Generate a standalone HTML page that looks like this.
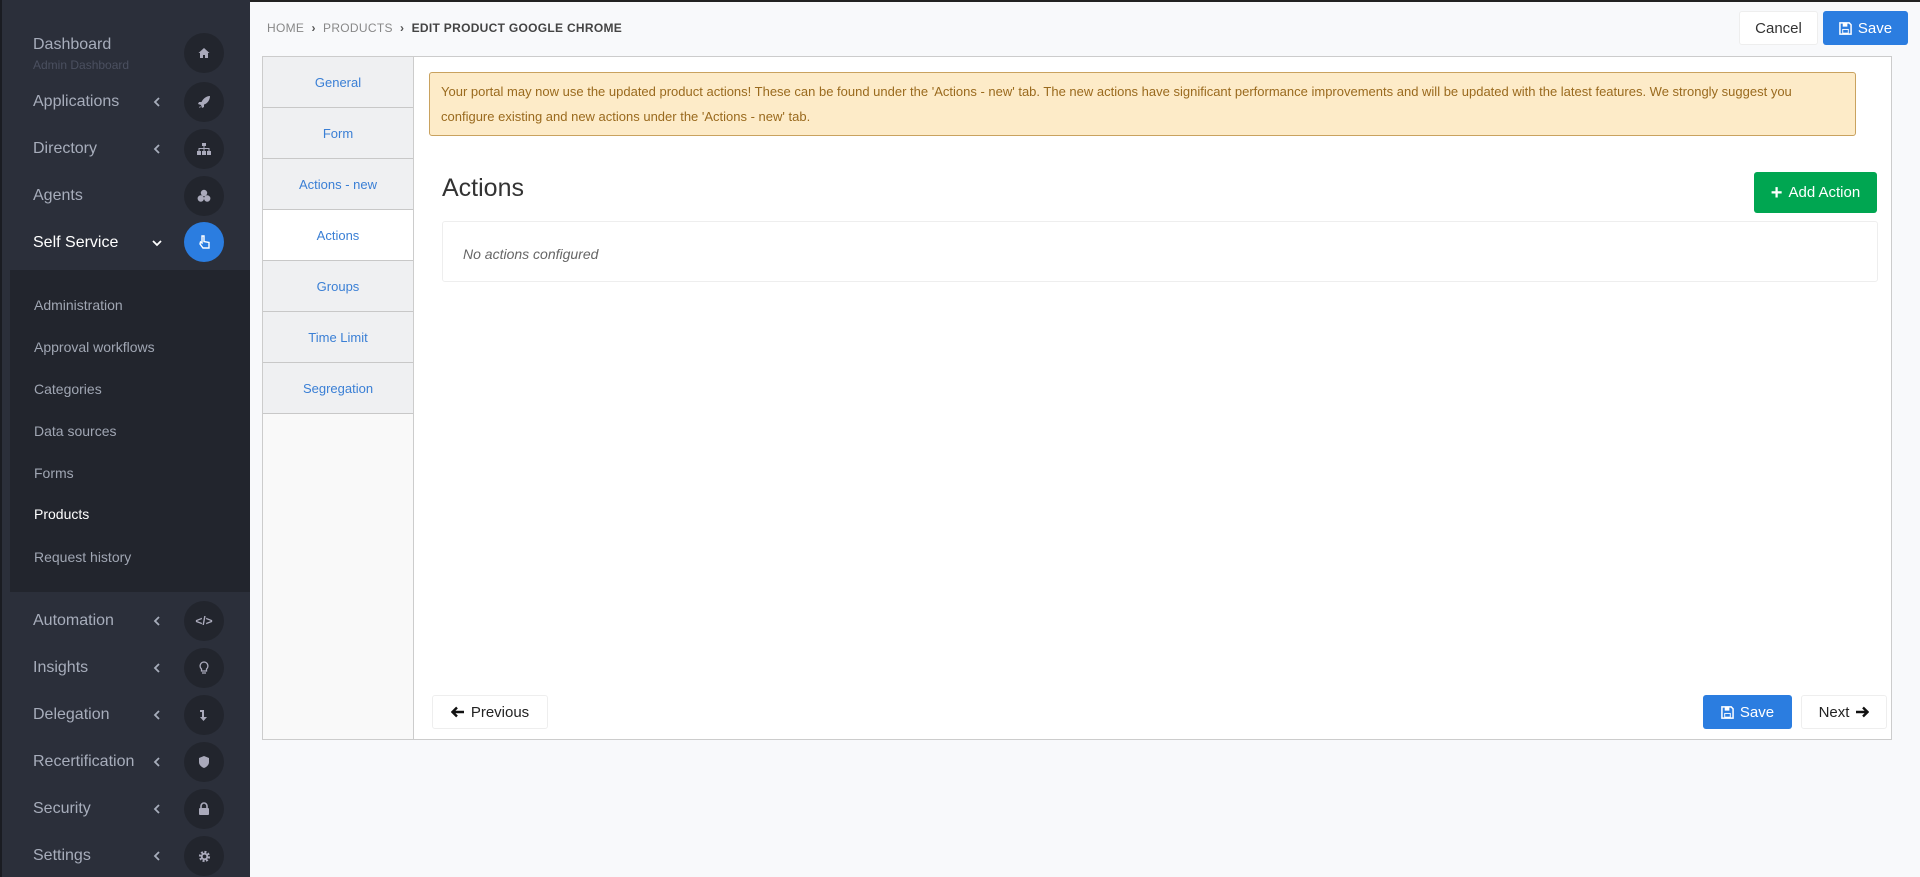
<!DOCTYPE html>
<html><head><meta charset="utf-8"><style>
*{box-sizing:border-box;margin:0;padding:0}
body{width:1920px;height:877px;overflow:hidden;font-family:"Liberation Sans",sans-serif;background:#f8f9fb;position:relative}
#sb{position:absolute;left:0;top:0;width:250px;height:877px;background:#2b2f3a;border-left:2px solid #1a1c22}
.it{position:absolute;left:31px;font-size:16px;color:#a7adbb}
.ic{position:absolute;left:182px;width:40px;height:40px;border-radius:50%;background:#22252d;display:flex;align-items:center;justify-content:center}
.ch{position:absolute;left:150px;width:10px;height:12px}
#sub{position:absolute;left:8px;top:270px;width:240px;height:322px;background:#22252d}
.si{position:absolute;left:32px;font-size:14px;color:#a0a6b3}
#main{position:absolute;left:250px;top:0;right:0;height:877px;border-top:2px solid #222}
.bc{position:absolute;left:267px;top:21px;font-size:12px;color:#888;letter-spacing:.3px}
.btn{position:absolute;border-radius:3px;font-size:15px;display:flex;align-items:center;justify-content:center;gap:6px}
#panel{position:absolute;left:262px;top:56px;width:1630px;height:684px;background:#fff;border:1px solid #ccc}
#tabs{position:absolute;left:0;top:0;width:151px;height:682px;background:#f9f9f9;border-right:1px solid #ccc}
.tab{height:51px;border-bottom:1px solid #c8c8c8;background:#eff0f2;color:#3a7fd5;font-size:13px;display:flex;align-items:center;justify-content:center}
.tab.a{background:#fff}
</style></head><body>
<div id="sb">
<div class="it" style="top:36px;color:#a7adbb">Dashboard</div>
<div style="position:absolute;left:31px;top:58px;font-size:12px;color:#4b5060">Admin Dashboard</div>
<div class="ic" style="top:33px"><svg width="12" height="12" viewBox="0 0 12 12"><path d="M6 1L0.5 6H2v5h3V8h2v3h3V6h1.5z" fill="#aab"/></svg></div>
<div class="it" style="top:93px">Applications</div><svg class="ch" style="top:96px" viewBox="0 0 10 12"><path d="M7 2L3 6l4 4" fill="none" stroke="#a7adbb" stroke-width="1.8"/></svg>
<div class="ic" style="top:82px"><svg width="14" height="14" viewBox="0 0 14 14"><path d="M13 1C9 1 6 4 4.5 7L2 7 1 9l3 1 1 3 2-1 0-2.5C10 9 13 5 13 1zM3 11l-1 2 2-1z" fill="#aab"/></svg></div>
<div class="it" style="top:140px">Directory</div><svg class="ch" style="top:143px" viewBox="0 0 10 12"><path d="M7 2L3 6l4 4" fill="none" stroke="#a7adbb" stroke-width="1.8"/></svg>
<div class="ic" style="top:129px"><svg width="14" height="12" viewBox="0 0 14 12"><rect x="5" y="0" width="4" height="3" fill="#aab"/><rect x="0" y="8" width="4" height="4" fill="#aab"/><rect x="5" y="8" width="4" height="4" fill="#aab"/><rect x="10" y="8" width="4" height="4" fill="#aab"/><path d="M7 3v5M2 8V5.5h10V8" stroke="#aab" fill="none"/></svg></div>
<div class="it" style="top:187px">Agents</div>
<div class="ic" style="top:176px"><svg width="14" height="14" viewBox="0 0 14 14"><circle cx="7" cy="4" r="3.2" fill="#aab"/><circle cx="3.8" cy="9.5" r="3.2" fill="#aab"/><circle cx="10.2" cy="9.5" r="3.2" fill="#aab"/></svg></div>
<div class="it" style="top:234px;color:#fff">Self Service</div><svg style="position:absolute;left:149px;top:237px;width:12px;height:12px" viewBox="0 0 12 12"><path d="M2 4l4 4 4-4" fill="none" stroke="#fff" stroke-width="1.8"/></svg>
<div class="ic" style="top:222px;background:#2b7de0"><svg width="14" height="14" viewBox="0 0 14 14"><path d="M5 1v7L3.5 7 3 9l3 4h6V7.5L7 6.5V1z" fill="none" stroke="#fff" stroke-width="1.4"/></svg></div>
<div id="sub"></div>
<div class="si" style="top:297px">Administration</div>
<div class="si" style="top:339px">Approval workflows</div>
<div class="si" style="top:381px">Categories</div>
<div class="si" style="top:423px">Data sources</div>
<div class="si" style="top:465px">Forms</div>
<div class="si" style="top:506px;color:#fff">Products</div>
<div class="si" style="top:549px">Request history</div>
<div class="it" style="top:612px">Automation</div><svg class="ch" style="top:615px" viewBox="0 0 10 12"><path d="M7 2L3 6l4 4" fill="none" stroke="#a7adbb" stroke-width="1.8"/></svg>
<div class="ic" style="top:601px;color:#aab;font-size:12px;font-weight:bold">&lt;/&gt;</div>
<div class="it" style="top:659px">Insights</div><svg class="ch" style="top:662px" viewBox="0 0 10 12"><path d="M7 2L3 6l4 4" fill="none" stroke="#a7adbb" stroke-width="1.8"/></svg>
<div class="ic" style="top:648px"><svg width="10" height="14" viewBox="0 0 10 14"><path d="M5 1a4 4 0 0 0-2.5 7V10h5V8A4 4 0 0 0 5 1zM3 12h4" fill="none" stroke="#aab" stroke-width="1.3"/></svg></div>
<div class="it" style="top:706px">Delegation</div><svg class="ch" style="top:709px" viewBox="0 0 10 12"><path d="M7 2L3 6l4 4" fill="none" stroke="#a7adbb" stroke-width="1.8"/></svg>
<div class="ic" style="top:695px"><svg width="10" height="14" viewBox="0 0 10 14"><path d="M1 2h4v7h3l-3.5 4L1 9h2V4H1z" fill="#aab"/></svg></div>
<div class="it" style="top:753px">Recertification</div><svg class="ch" style="top:756px" viewBox="0 0 10 12"><path d="M7 2L3 6l4 4" fill="none" stroke="#a7adbb" stroke-width="1.8"/></svg>
<div class="ic" style="top:742px"><svg width="12" height="14" viewBox="0 0 12 14"><path d="M6 1L1 3v4c0 3 2.5 5 5 6 2.5-1 5-3 5-6V3z" fill="#aab"/></svg></div>
<div class="it" style="top:800px">Security</div><svg class="ch" style="top:803px" viewBox="0 0 10 12"><path d="M7 2L3 6l4 4" fill="none" stroke="#a7adbb" stroke-width="1.8"/></svg>
<div class="ic" style="top:789px"><svg width="12" height="14" viewBox="0 0 12 14"><path d="M3 6V4a3 3 0 0 1 6 0v2" fill="none" stroke="#aab" stroke-width="1.6"/><rect x="1" y="6" width="10" height="7" rx="1" fill="#aab"/></svg></div>
<div class="it" style="top:847px">Settings</div><svg class="ch" style="top:850px" viewBox="0 0 10 12"><path d="M7 2L3 6l4 4" fill="none" stroke="#a7adbb" stroke-width="1.8"/></svg>
<div class="ic" style="top:836px"><svg width="13" height="13" viewBox="0 0 14 14"><circle cx="7" cy="7" r="4.5" fill="none" stroke="#aab" stroke-width="3" stroke-dasharray="2 1.5"/><circle cx="7" cy="7" r="3" fill="none" stroke="#aab" stroke-width="2"/></svg></div>
</div>
<div id="main"></div>
<div class="bc">HOME &nbsp;<b style="color:#555">&#8250;</b>&nbsp; PRODUCTS &nbsp;<b style="color:#555">&#8250;</b>&nbsp; <b style="color:#444">EDIT PRODUCT GOOGLE CHROME</b></div>
<div class="btn" style="left:1739px;top:11px;width:79px;height:34px;background:#fff;border:1px solid #eee;color:#333">Cancel</div>
<div class="btn" style="left:1823px;top:11px;width:85px;height:34px;background:#2b7de0;color:#fff"><svg width="13" height="13" viewBox="0 0 14 14"><path d="M1 1h10l2 2v10H1z" fill="none" stroke="#fff" stroke-width="1.6"/><rect x="4" y="1" width="5" height="4" fill="#fff"/><rect x="4" y="8" width="6" height="4" fill="none" stroke="#fff"/></svg>Save</div>
<div id="panel">
<div id="tabs">
<div class="tab">General</div><div class="tab">Form</div><div class="tab">Actions - new</div><div class="tab a">Actions</div><div class="tab">Groups</div><div class="tab">Time Limit</div><div class="tab">Segregation</div>
</div>
<div style="position:absolute;left:166px;top:15px;width:1427px;height:64px;background:#fdebc8;border:1px solid #c9a25f;border-radius:3px;color:#9a6a1e;font-size:13px;line-height:25px;padding:6px 11px">Your portal may now use the updated product actions! These can be found under the 'Actions - new' tab. The new actions have significant performance improvements and will be updated with the latest features. We strongly suggest you configure existing and new actions under the 'Actions - new' tab.</div>
<div style="position:absolute;left:179px;top:117px;font-size:25px;color:#333">Actions</div>
<div class="btn" style="left:1491px;top:115px;width:123px;height:41px;background:#00a651;color:#fff;font-size:15px"><b style="font-size:20px;line-height:1">+</b>Add Action</div>
<div style="position:absolute;left:179px;top:164px;width:1436px;height:61px;border:1px solid #eee;border-radius:3px;padding:24px 20px;font-style:italic;color:#666;font-size:14px">No actions configured</div>
<div class="btn" style="left:169px;top:638px;width:116px;height:34px;background:#fff;border:1px solid #eee;color:#222"><svg width="14" height="12" viewBox="0 0 14 12"><path d="M13 6H2M6 1.5L1.5 6 6 10.5" fill="none" stroke="#111" stroke-width="2.4"/></svg> Previous</div>
<div class="btn" style="left:1440px;top:638px;width:89px;height:34px;background:#2b7de0;color:#fff"><svg width="13" height="13" viewBox="0 0 14 14"><path d="M1 1h10l2 2v10H1z" fill="none" stroke="#fff" stroke-width="1.6"/><rect x="4" y="1" width="5" height="4" fill="#fff"/><rect x="4" y="8" width="6" height="4" fill="none" stroke="#fff"/></svg>Save</div>
<div class="btn" style="left:1538px;top:638px;width:86px;height:34px;background:#fff;border:1px solid #eee;color:#222">Next <svg width="14" height="12" viewBox="0 0 14 12"><path d="M1 6h11M8 1.5L12.5 6 8 10.5" fill="none" stroke="#111" stroke-width="2.4"/></svg></div>
</div>
</body></html>
